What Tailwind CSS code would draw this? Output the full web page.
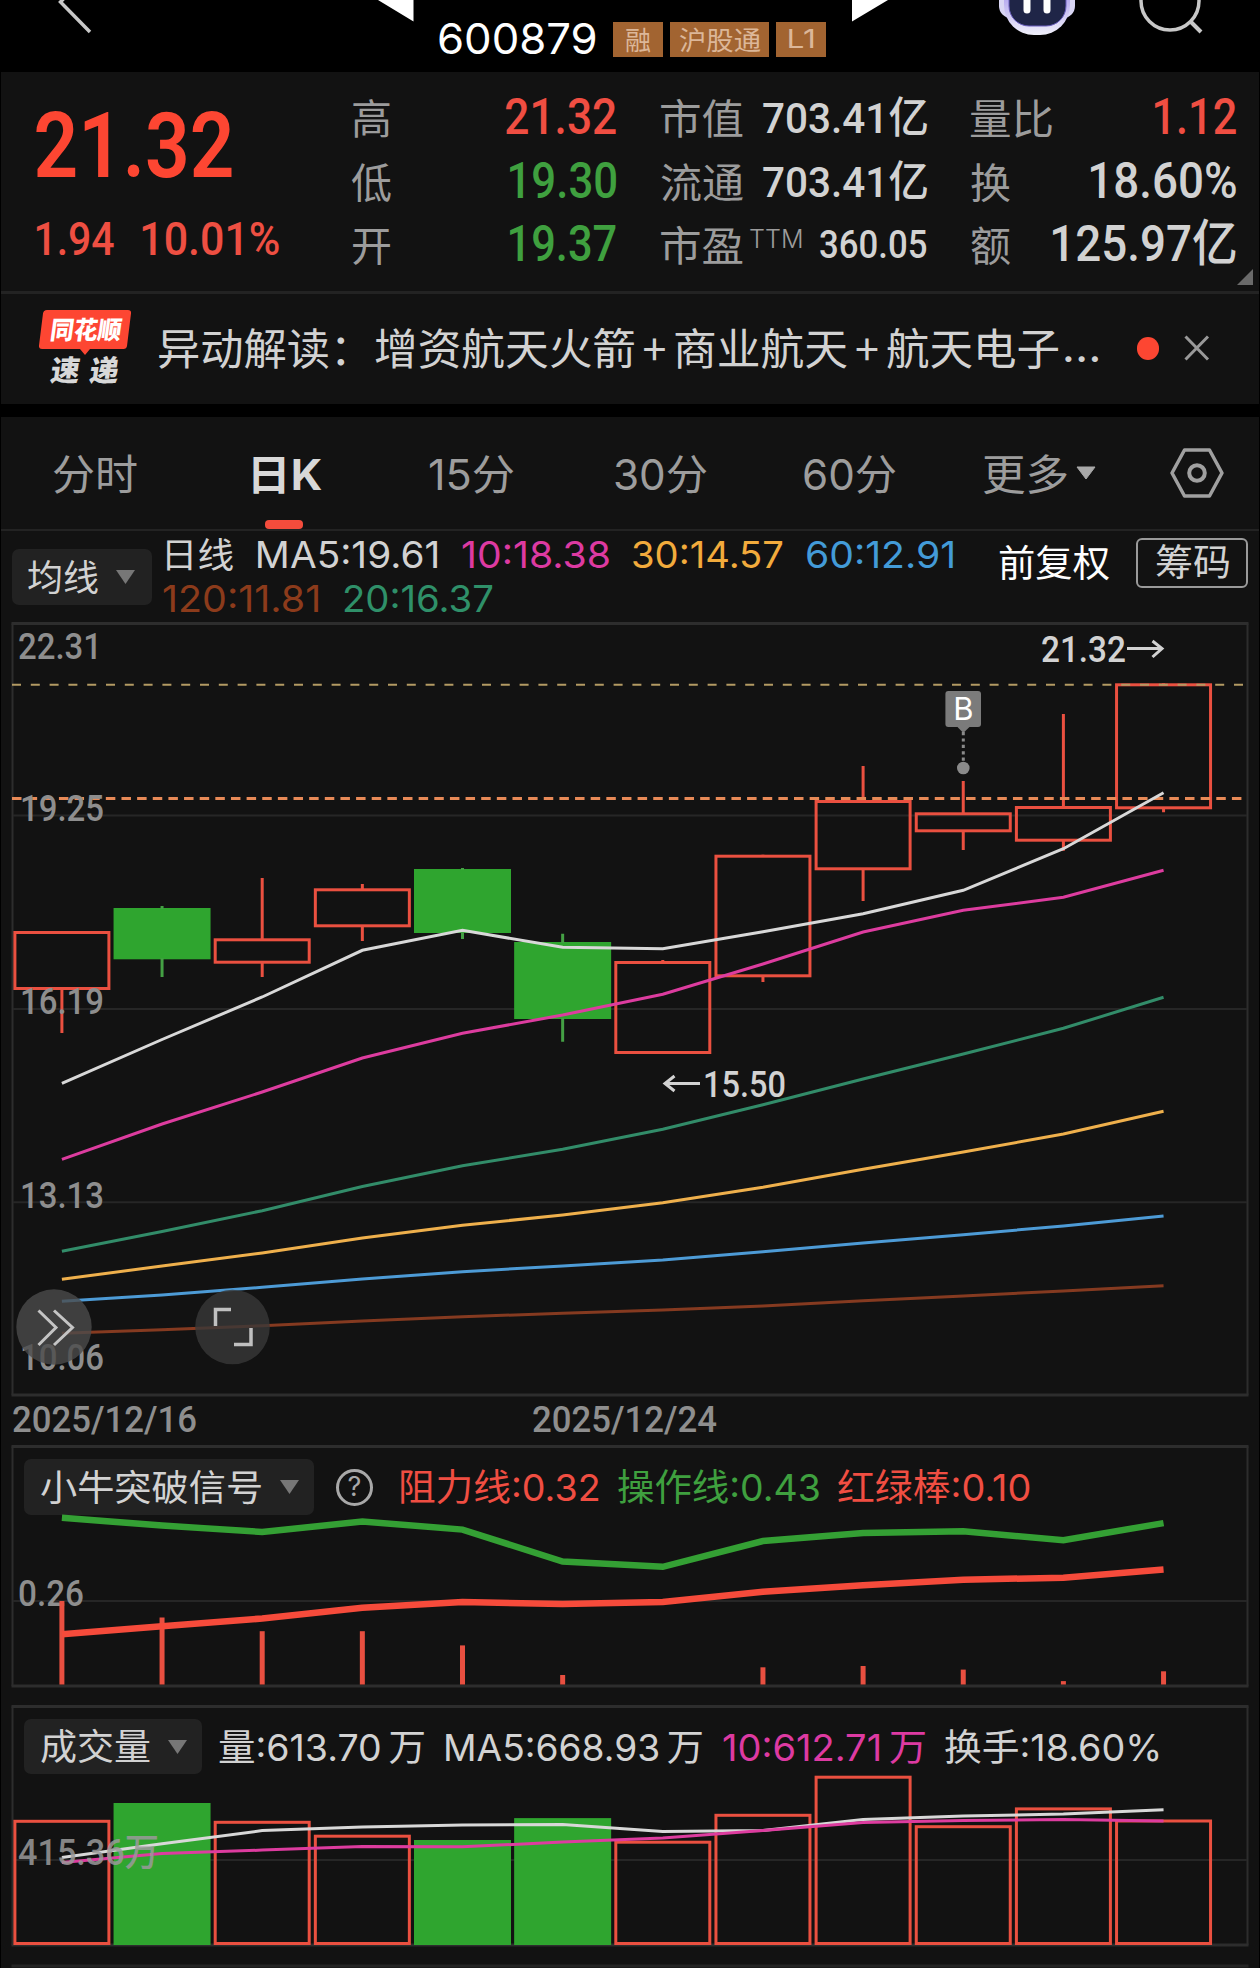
<!DOCTYPE html>
<html lang="zh-CN">
<head>
<meta charset="utf-8">
<title>600879</title>
<script src="https://cdn.jsdelivr.net/npm/@tailwindcss/browser@4"></script>
</head>
<body class="bg-black">
<div class="w-[1260px] h-[1968px] overflow-hidden bg-black px-px font-['Noto_Sans_CJK_SC',sans-serif] text-[#d2d2d2] whitespace-nowrap">

  <!-- title bar -->
  <header class="relative h-[72px] -mx-px">
    <svg class="absolute inset-0" width="1260" height="72" viewBox="0 0 1260 72" fill="none">
      <path d="M88.500 -28 60.500 2 90 32" stroke="#c8c8c8" stroke-width="3.500"/>
      <path d="M378 0H413.500V21.500ZM852 0H888L852 21.500Z" fill="#fff"/>
      <defs>
        <linearGradient id="shell" x1="0" y1="0" x2="0" y2="1"><stop offset=".5" stop-color="#b9aef0"/><stop offset="1" stop-color="#f0f0fa"/></linearGradient>
      </defs>
      <rect x="999" y="-14" width="76" height="32" rx="12" fill="#d9d6f4"/>
      <rect x="1004" y="-34" width="66" height="69" rx="30" fill="url(#shell)"/>
      <rect x="1009" y="-30" width="57" height="56" rx="20" fill="#1f2547" stroke="#6a5fc0" stroke-width="1"/>
      <rect x="1023.500" y="-8" width="7" height="21.500" rx="3.500" fill="#fff"/>
      <rect x="1043.500" y="-8" width="7" height="21.500" rx="3.500" fill="#fff"/>
      <circle cx="1170" cy="1" r="29" stroke="#c8c8c8" stroke-width="3.500"/>
      <path d="M1190 21 1201 32" stroke="#c8c8c8" stroke-width="4"/>
    </svg>
    <div class="flex items-start pl-[439px] pt-[22px]">
      <span data-w="157" class="font-[Inter] text-[43px] leading-[33px] text-white">600879</span>
      <div class="ml-[17px] flex gap-[7px] text-[26px] leading-[34px] text-[#dcb799]">
        <span class="w-[50px] h-[35px] bg-[#a26431] text-center">融</span>
        <span class="w-[99px] h-[35px] bg-[#a26431] text-center"><span data-w="82">沪股通</span></span>
        <span class="w-[50px] h-[35px] bg-[#a26431] text-center font-[Inter]"><span data-w="25">L1</span></span>
      </div>
    </div>
  </header>

  <!-- quote -->
  <section class="relative h-[219px] bg-[#121212] pt-[13px] flex font-[Roboto,'Noto_Sans_CJK_SC',sans-serif] font-medium">
    <div class="w-[350px] pl-[35px] text-[#fd4632]">
      <div class="h-[122px] flex items-center"><span data-w="196" class="text-[91px] leading-[100px] font-semibold">21.32</span></div>
      <div class="h-[64px] flex items-center gap-[28px] text-[47px] leading-[64px] text-[#ee4f42]"><span data-w="78">1.94</span><span data-w="137">10.01%</span></div>
    </div>
    <div class="w-[265px] grid grid-rows-[64px_63px_64px] text-[50px] leading-[64px] content-start">
      <div class="flex justify-between"><span class="-mt-px font-['Noto_Sans_CJK_SC'] font-normal text-[41px] text-[#9c9c9c]">高</span><span data-w="110" class="text-[#f04e42]">21.32</span></div>
      <div class="flex justify-between"><span class="-mt-px font-['Noto_Sans_CJK_SC'] font-normal text-[41px] text-[#9c9c9c]">低</span><span data-w="106" class="text-[#3fa03f]">19.30</span></div>
      <div class="flex justify-between"><span class="-mt-px font-['Noto_Sans_CJK_SC'] font-normal text-[41px] text-[#9c9c9c]">开</span><span data-w="106" class="text-[#3fa03f]">19.37</span></div>
    </div>
    <div class="ml-[45px] w-[266px] grid grid-rows-[64px_63px_64px] text-[43px] leading-[64px] content-start">
      <div class="flex justify-between"><span data-w="82" class="-mt-px font-['Noto_Sans_CJK_SC'] font-normal text-[41px] text-[#9c9c9c]">市值</span><span data-w="164" class="mt-px">703.41亿</span></div>
      <div class="flex justify-between"><span data-w="82" class="-mt-px font-['Noto_Sans_CJK_SC'] font-normal text-[41px] text-[#9c9c9c]">流通</span><span data-w="164" class="mt-px">703.41亿</span></div>
      <div class="flex"><span data-w="82" class="-mt-px font-['Noto_Sans_CJK_SC'] font-normal text-[41px] text-[#9c9c9c]">市盈</span><span data-w="52" class="ml-[7px] -mt-[5px] font-[Inter] font-light text-[25px] text-[#9c9c9c]">TTM</span><span data-w="107" class="ml-[18px] text-[38px] mt-px">360.05</span></div>
    </div>
    <div class="ml-[43px] w-[266px] grid grid-rows-[64px_63px_64px] text-[50px] leading-[64px] content-start">
      <div class="flex justify-between"><span data-w="82" class="-mt-px font-['Noto_Sans_CJK_SC'] font-normal text-[41px] text-[#9c9c9c]">量比</span><span data-w="81" class="text-[#f04e42]">1.12</span></div>
      <div class="flex justify-between"><span class="-mt-px font-['Noto_Sans_CJK_SC'] font-normal text-[41px] text-[#9c9c9c]">换</span><span data-w="145">18.60%</span></div>
      <div class="flex justify-between"><span class="-mt-px font-['Noto_Sans_CJK_SC'] font-normal text-[41px] text-[#9c9c9c]">额</span><span data-w="183">125.97亿</span></div>
    </div>
    <svg class="absolute right-[6px] bottom-[6px]" width="16" height="16"><path d="M16 0V16H0Z" fill="#6a6a6a"/></svg>
  </section>

  <!-- news -->
  <section class="h-[113px] bg-[#121212] border-t-3 border-[#232323] flex items-center pl-[38px]">
    <svg class="-mt-[2px]" width="94" height="80" viewBox="39 308 94 80">
      <path d="M47 310H128Q131.500 310 131 313.500L127 346Q126.500 349 123.500 349H90L85 355 80 349H42Q38.500 349 39 345.500L43 313.500Q43.500 310 47 310Z" fill="#fd4632"/>
      <g transform="skewX(-8)" font-weight="900" font-family="'Noto Sans CJK SC',sans-serif">
        <text x="97" y="339" font-size="25" fill="#fff" textLength="71" lengthAdjust="spacingAndGlyphs">同花顺</text>
        <text x="103" y="381" font-size="29" fill="#d8d8d8" textLength="68">速递</text>
      </g>
    </svg>
    <div class="ml-[26px] flex text-[43px] leading-[60px] -mt-[6px]">
      <span data-w="186">异动解读：</span><span data-w="259" class="ml-[30px]">增资航天火箭</span><span class="w-[41px] text-center text-[43px]">+</span><span data-w="172">商业航天</span><span class="w-[40px] text-center text-[43px]">+</span><span data-w="171">航天电子</span><span data-w="34" class="ml-[7px] font-[Inter]">...</span>
    </div>
    <div class="ml-[38px] w-[22px] h-[23px] -mt-px rounded-full bg-[#fd4632]"></div>
    <svg class="ml-[25px] -mt-[2px]" width="26" height="26" viewBox="0 0 26 26"><path d="M1.500 1.500 24 24.500M24 1.500 1.500 24.500" stroke="#999" stroke-width="3"/></svg>
  </section>

  <div class="h-[13px]"></div>

  <!-- period tabs -->
  <nav class="relative h-[114px] bg-[#121212] border-b-2 border-[#232323] flex items-center pl-[52px] font-[Inter,'Noto_Sans_CJK_SC',sans-serif] text-[42px] leading-[60px] text-[#9d9d9d]">
    <span data-w="84" class="mt-[4px]">分时</span>
    <span data-w="69" class="ml-[116px] mt-[4px] font-bold text-[#d8d8d8]">日K</span>
    <span data-w="85" class="ml-[107px] mt-[4px]">15分</span>
    <span data-w="92" class="ml-[101px] mt-[4px]">30分</span>
    <span data-w="92" class="ml-[97px] mt-[4px]">60分</span>
    <span data-w="84" class="ml-[87px] mt-[4px]">更多</span>
    <svg class="ml-[9px]" width="20" height="14"><path d="M1 1H19L10 13Z" fill="#a8a8a8" stroke="#a8a8a8" stroke-linejoin="round"/></svg>
    <svg class="ml-[73px]" width="56" height="50" viewBox="0 0 56 50" fill="none" stroke="#a0a0a0" stroke-width="3.500" stroke-linejoin="round"><path d="M15.500 2H40.500L53 25 40.500 48H15.500L3 25Z"/><circle cx="28" cy="25" r="7.800" stroke-width="4"/></svg>
    <span class="absolute left-[264px] bottom-0 w-[38px] h-[9px] rounded-[4px] bg-[#f44c3c]"></span>
  </nav>

  <!-- moving averages -->
  <section class="h-[91px] bg-[#121212] flex pl-[11px] font-[Inter,'Noto_Sans_CJK_SC',sans-serif] text-[37px]">
    <div class="mt-[18px] w-[140px] h-[56px] rounded-[7px] bg-[#222] flex items-center pl-4">
      <span data-w="70" class="text-[36px] leading-[56px] mt-px">均线</span>
      <svg class="ml-[18px]" width="19" height="14"><path d="M0 0H19L9.500 14Z" fill="#777"/></svg>
    </div>
    <div class="ml-[11px] w-[832px]">
      <div class="flex h-[44px] leading-[48px]">
        <span data-w="66" class="ml-[4px] text-[35px]">日线</span><span data-w="179" class="ml-[25px]">MA5:19.61</span><span data-w="147" class="ml-[25px] text-[#dd3aa2]">10:18.38</span><span data-w="150" class="ml-[24px] text-[#f2ab3c]">30:14.57</span><span data-w="146" class="ml-[24px] text-[#439bd8]">60:12.91</span>
      </div>
      <div class="flex h-[44px] leading-[48px]">
        <span data-w="155" class="text-[#8c3b1b]">120:11.81</span><span data-w="149" class="ml-[26px] text-[#2f9069]">20:16.37</span>
      </div>
    </div>
    <span data-w="110" class="ml-[4px] text-[37px] leading-[66px] text-white">前复权</span>
    <div class="ml-[27px] mt-[7px] w-[112px] h-[50px] rounded-[6px] border-2 border-[#9a9a9a] flex items-center justify-center"><span data-w="73" class="text-[37px] leading-[46px]">筹码</span></div>
  </section>

  <!-- candles -->
  <section class="h-[820px] bg-[#121212]">
    <svg id="kline" class="-ml-px" width="1260" height="820" viewBox="0 622 1260 820" fill="none" font-family="Roboto,sans-serif" font-weight="500" font-size="37.500"></svg>
  </section>

  <!-- indicator -->
  <section class="relative h-[252px] bg-[#121212]">
    <div class="relative z-0 flex items-center pl-[23px] pt-4 font-[Inter,'Noto_Sans_CJK_SC',sans-serif] text-[37px] leading-[56px]">
      <div class="w-[290px] h-[56px] rounded-[7px] bg-[#222] flex items-center pl-[17px]">
        <span data-w="220" class="text-[36px] mt-px">小牛突破信号</span>
        <svg class="ml-[19px]" width="19" height="14"><path d="M0 0H19L9.500 14Z" fill="#777"/></svg>
      </div>
      <div class="ml-[22px] w-[37px] h-[37px] rounded-full border-3 border-[#a8a8a8] flex items-center justify-center text-[27px] leading-[30px] text-[#a8a8a8]">?</div>
      <div class="flex ml-[28px] mt-[2px]"><span data-w="197" class="text-[#f04e42]">阻力线:0.32</span><span data-w="201" class="ml-[20px] text-[#3fa03f]">操作线:0.43</span><span data-w="192" class="ml-[19px] text-[#f04e42]">红绿棒:0.10</span></div>
    </div>
    <svg id="signal" class="absolute inset-y-0 -left-px" width="1260" height="252" viewBox="0 1442 1260 252" fill="none" font-family="Roboto,sans-serif" font-weight="500" font-size="37.500"></svg>
  </section>

  <!-- volume -->
  <section class="relative h-[274px] bg-[#121212]">
    <svg id="volume" class="absolute inset-y-0 -left-px" width="1260" height="274" viewBox="0 1694 1260 274" fill="none" font-family="Roboto,'Noto Sans CJK SC',sans-serif" font-weight="500" font-size="37.500"></svg>
    <div class="relative flex items-center pl-[23px] pt-[24px] font-[Inter,'Noto_Sans_CJK_SC',sans-serif] text-[37px] leading-[55px]">
      <div class="w-[178px] h-[55px] rounded-[7px] bg-[#222] flex items-center pl-[17px]">
        <span data-w="109" class="text-[36px] mt-[2px]">成交量</span>
        <svg class="ml-[18px]" width="19" height="14"><path d="M0 0H19L9.500 14Z" fill="#777"/></svg>
      </div>
      <div class="flex ml-[17px] mt-[2px]"><span data-w="205">量:613.70&#8201;万</span><span data-w="256" class="ml-[22px]">MA5:668.93&#8201;万</span><span data-w="202" class="ml-[21px] text-[#dd3aa2]">10:612.71&#8201;万</span><span data-w="214" class="ml-[20px]">换手:18.60%</span></div>
    </div>
  </section>
</div>

<script>
const RED = '#ea5040', GREEN = '#2fa52f', PINK = '#dd3c9f', FRAME = '#2d2d2d', LABEL = '#8e8e8e';
const cx = i => 61.9 + i * 100.15;
const poly = (ys, color, w = 3) => `<polyline points="${ys.map((y, i) => cx(i) + ',' + y).join(' ')}" stroke="${color}" stroke-width="${w}"/>`;
const frame = (t, b) => `<path d="M12.500 ${t}V${b}M1247.500 ${t}V${b}" stroke="${FRAME}" stroke-width="2"/>` +
  `<path d="M11.500 ${t}H1248.500M11.500 ${b}H1248.500" stroke="${FRAME}" stroke-width="3"/>`;
const grid = ys => ys.map(y => `<path d="M13 ${y}H1247" stroke="#262626" stroke-width="2"/>`).join('');
const label = (s, x, base, w, color = LABEL) => `<text x="${x - 2}" y="${base}" textLength="${w + 4}" lengthAdjust="spacingAndGlyphs" fill="${color}">${s}</text>`;
const body = (i, t, b, up) => up
  ? `<rect x="${cx(i) - 47}" y="${t + 1.5}" width="94" height="${b - t - 3}" stroke="${RED}" stroke-width="3"/>`
  : `<rect x="${cx(i) - 48.5}" y="${t}" width="97" height="${b - t}" fill="${GREEN}"/>`;

// [high, top, bottom, low, rising]
const candles = [
  [931, 931, 990, 1033, 1], [906, 908, 959.3, 977, 0], [878, 938.3, 963.7, 977, 1], [884, 888.3, 927.3, 941, 1],
  [868, 869, 933, 939, 0], [933.7, 942, 1019, 1041.7, 0], [960, 961, 1054, 1054, 1], [854.7, 854.7, 977.3, 982, 1],
  [766, 800, 870.3, 901, 1], [781, 812.3, 832.3, 850, 1], [714, 806, 841.7, 850.7, 1], [683.3, 683.3, 809.3, 812.3, 1]
];
document.getElementById('kline').innerHTML =
  frame(623.5, 1395) + grid([815.5, 1009, 1202.3]) +
  candles.map(([h, t, b, l, up], i) =>
    body(i, t, b, up) + `<path d="M${cx(i)} ${h}V${t + 1}M${cx(i)} ${b - 1}V${l}" stroke="${up ? RED : '#44a044'}" stroke-width="3"/>`).join('') +
  '<path d="M12 684.700H1243" stroke="#b39a63" stroke-width="2" stroke-dasharray="9 9.800"/>' +
  '<path d="M12 798.500H1243" stroke="#e88a57" stroke-width="3" stroke-dasharray="9.500 6.140"/>' +
  poly([1333.3, 1329.7, 1325.7, 1321, 1316.7, 1313.3, 1310, 1306, 1300.7, 1296, 1291, 1285.7], '#853a20') +
  poly([1301.3, 1295, 1287.3, 1279, 1271.7, 1266, 1260, 1251.7, 1243, 1234.7, 1226, 1216], '#4d9bd6') +
  poly([1279.3, 1266, 1253, 1238, 1225.3, 1215, 1202.7, 1187.3, 1169.3, 1152, 1134, 1111.3], '#efb04c') +
  poly([1251.3, 1231.5, 1210.7, 1186.5, 1165.7, 1149.3, 1129.3, 1104.7, 1079, 1054, 1028.3, 997.3], '#328c69') +
  poly([1159.3, 1124, 1092, 1058, 1033.3, 1015, 994.3, 964, 932, 910.3, 897.3, 870.3], PINK) +
  poly([1083.3, 1039.5, 997, 950.3, 930.3, 947.3, 948.7, 931.7, 913.7, 890.3, 848.7, 792.7], '#d8d8d8') +
  label('22.31', 20, 659, 80) + label('19.25', 22, 821, 80) + label('16.19', 22, 1014, 80) + label('13.13', 22, 1207.5, 80) + label('10.06', 22, 1370, 80) +
  label('21.32', 1043, 662, 81, '#d2d2d2') +
  '<path d="M1127 648.500H1162M1152.500 641 1162 648.500 1152.500 657" stroke="#d2d2d2" stroke-width="3"/>' +
  label('15.50', 705, 1097, 79, '#d2d2d2') +
  '<path d="M700 1083.500H665M674.500 1076 665 1083.500 674.500 1091" stroke="#d2d2d2" stroke-width="3"/>' +
  '<rect x="945.400" y="691" width="35.600" height="36" rx="3" fill="#7b7b7b"/><path d="M956.500 726H970.500L963.300 733Z" fill="#7b7b7b"/>' +
  '<path d="M963.300 732V762" stroke="#8a8a8a" stroke-width="3" stroke-dasharray="3.200 3.200"/><circle cx="963.300" cy="768" r="6.300" fill="#8a8a8a"/>' +
  '<text x="963.300" y="720" font-family="Inter" font-size="31" font-weight="400" text-anchor="middle" fill="#fff">B</text>' +
  label('2025/12/16', 14, 1432, 181) + label('2025/12/24', 534, 1432, 181) +
  '<circle cx="54" cy="1327" r="37.700" fill="#4b4b4b" fill-opacity=".8"/><path d="M38.500 1310.500 56 1327.500 38.500 1345M54 1310.500 72.500 1327.500 54 1345" stroke="#c4c4c4" stroke-width="3"/>' +
  '<circle cx="232.500" cy="1327" r="37.300" fill="#383838" fill-opacity=".8"/><path d="M215.500 1326V1309.500H231M251 1328V1344.500H234" stroke="#c0c0c0" stroke-width="3.500"/>';

const sticks = [1601, 1617.5, 1631.2, 1631.2, 1645.4, 1675, null, 1667.3, 1666, 1669.6, 1681.1, 1671.3];
document.getElementById('signal').innerHTML =
  frame(1446.5, 1686) + grid([1601]) + label('0.26', 20, 1605.7, 62) +
  sticks.map((y, i) => y ? `<path d="M${cx(i)} ${y}V1684.500" stroke="#e84f40" stroke-width="5"/>` : '').join('') +
  poly([1517.8, 1525.6, 1532, 1521.5, 1529.6, 1561.5, 1566.8, 1541, 1533, 1531.2, 1540.3, 1523.1], '#34a034', 6.5) +
  poly([1634.3, 1626.2, 1618.5, 1607.7, 1602, 1604, 1602, 1591.8, 1585.2, 1579.7, 1577.7, 1569.6], '#f64b3b', 6.5);

const volumes = [1819.8, 1803, 1820.8, 1834.7, 1840, 1818.1, 1840.7, 1813.8, 1775.7, 1825.2, 1807.4, 1819.5];
document.getElementById('volume').innerHTML =
  frame(1706.5, 1945) + grid([1860]) +
  volumes.map((t, i) => body(i, t, 1945, candles[i][4])).join('') +
  poly([1857.5, 1843.8, 1830.6, 1826.9, 1824.9, 1824.6, 1831.6, 1830.6, 1819.5, 1816.1, 1814.1, 1809.7], '#d8d8d8') +
  poly([1862.6, 1853.5, 1850.1, 1846.4, 1846.8, 1842.1, 1838, 1830.6, 1822.6, 1820.5, 1819.5, 1821.1], PINK) +
  `<g opacity=".85">${label('415.36万', 20, 1865.3, 137, '#9a9a9a')}</g>` +
  '<path d="M11.500 1966H1248.500" stroke="#242424" stroke-width="3"/>';

// condense each run of text to its own column width
function fitText() {
  const ctx = document.createElement('canvas').getContext('2d');
  document.querySelectorAll('[data-w]').forEach(el => {
    const text = el.textContent, w = +el.dataset.w, cs = getComputedStyle(el);
    ctx.font = `${cs.fontWeight} ${cs.fontSize} ${cs.fontFamily}`;
    const m = ctx.measureText(text);
    const s = w / (m.actualBoundingBoxRight + m.actualBoundingBoxLeft);
    const inner = document.createElement('span');
    inner.textContent = text;
    inner.className = 'inline-block origin-left';
    inner.style.transform = `translateX(${m.actualBoundingBoxLeft * s}px) scaleX(${s})`;
    el.replaceChildren(inner);
    el.style.display = 'inline-block';
    el.style.textAlign = 'left';
    el.style.width = w + 'px';
    el.style.flexShrink = 0;
  });
}
window.addEventListener('load', fitText);
</script>
</body>
</html>
